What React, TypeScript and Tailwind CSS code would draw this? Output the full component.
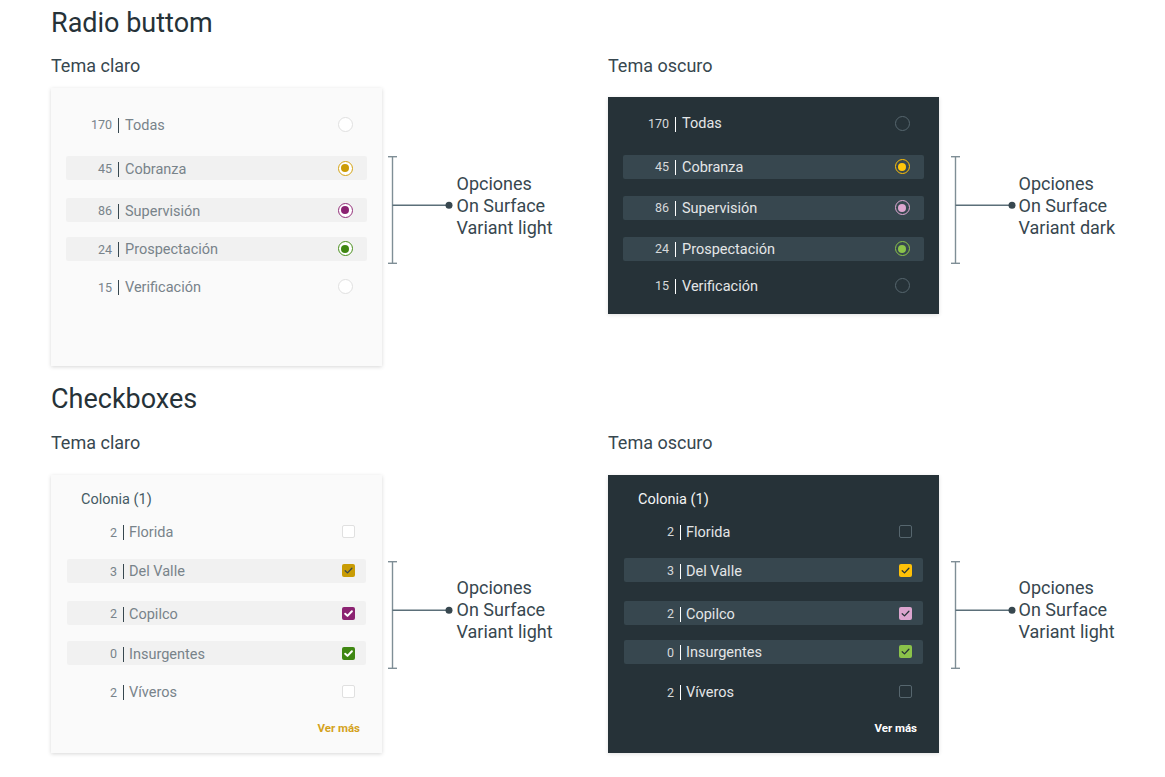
import React from "react";

type RadioRow = {
  n: string;
  label: string;
  hl: boolean;
  mt: string;
  border: string;
  dot?: string;
};

type CheckRow = {
  n: string;
  label: string;
  hl: boolean;
  mt: string;
  box: string;
  check?: string;
  cw?: number;
};

const radioLight: RadioRow[] = [
  { n: "170", label: "Todas", hl: false, mt: "mt-[24.5px]", border: "border-[#e0e0e0] bg-white" },
  { n: "45", label: "Cobranza", hl: true, mt: "mt-[20px]", border: "border-[#d4a313] bg-white", dot: "bg-[#cc9c05]" },
  { n: "86", label: "Supervisión", hl: true, mt: "mt-[18px]", border: "border-[#93307a] bg-white", dot: "bg-[#8b2271]" },
  { n: "24", label: "Prospectación", hl: true, mt: "mt-[14.5px]", border: "border-[#4a8f1c] bg-white", dot: "bg-[#3f8712]" },
  { n: "15", label: "Verificación", hl: false, mt: "mt-[14px]", border: "border-[#e0e0e0] bg-white" },
];

const radioDark: RadioRow[] = [
  { n: "170", label: "Todas", hl: false, mt: "mt-[14px]", border: "border-[#56666e]" },
  { n: "45", label: "Cobranza", hl: true, mt: "mt-[19.5px]", border: "border-[#ffc107]", dot: "bg-[#ffc60a]" },
  { n: "86", label: "Supervisión", hl: true, mt: "mt-[17px]", border: "border-[#e0a9d4]", dot: "bg-[#dea6d0]" },
  { n: "24", label: "Prospectación", hl: true, mt: "mt-[17px]", border: "border-[#8bc34a]", dot: "bg-[#8bc34a]" },
  { n: "15", label: "Verificación", hl: false, mt: "mt-[13px]", border: "border-[#56666e]" },
];

const checkLight: CheckRow[] = [
  { n: "2", label: "Florida", hl: false, mt: "mt-[9px]", box: "border border-[#e0e0e0] bg-white" },
  { n: "3", label: "Del Valle", hl: true, mt: "mt-[15px]", box: "bg-[#c99c04]", check: "#37474f", cw: 1.3 },
  { n: "2", label: "Copilco", hl: true, mt: "mt-[18.5px]", box: "bg-[#8b2271]", check: "#ffffff", cw: 2 },
  { n: "0", label: "Insurgentes", hl: true, mt: "mt-[16px]", box: "bg-[#3f8712]", check: "#ffffff", cw: 2 },
  { n: "2", label: "Víveros", hl: false, mt: "mt-[14.5px]", box: "border border-[#e0e0e0] bg-white" },
];

const checkDark: CheckRow[] = [
  { n: "2", label: "Florida", hl: false, mt: "mt-[8.5px]", box: "border border-[#56666e]" },
  { n: "3", label: "Del Valle", hl: true, mt: "mt-[15px]", box: "bg-[#ffc107]", check: "#263238", cw: 1.3 },
  { n: "2", label: "Copilco", hl: true, mt: "mt-[19px]", box: "bg-[#dca5cf]", check: "#263238", cw: 1.3 },
  { n: "0", label: "Insurgentes", hl: true, mt: "mt-[14.5px]", box: "bg-[#8bc34a]", check: "#263238", cw: 1.3 },
  { n: "2", label: "Víveros", hl: false, mt: "mt-[16px]", box: "border border-[#56666e]" },
];

function Radio({ border, dot }: { border: string; dot?: string }) {
  return (
    <span className={`flex h-[15px] w-[15px] items-center justify-center rounded-full border-[1.3px] ${border}`}>
      {dot && <span className={`h-[8px] w-[8px] rounded-full ${dot}`} />}
    </span>
  );
}

function Check({ box, check, cw }: { box: string; check?: string; cw?: number }) {
  return (
    <span className={`flex h-[13px] w-[13px] items-center justify-center rounded-[2px] ${box}`}>
      {check && (
        <svg viewBox="0 0 13 13" width="13" height="13">
          <path d="M3.2 6.7 L5.5 8.9 L9.9 4.3" fill="none" stroke={check} strokeWidth={cw} strokeLinecap="round" strokeLinejoin="round" />
        </svg>
      )}
    </span>
  );
}

function RadioCard({ dark, rows }: { dark: boolean; rows: RadioRow[] }) {
  return (
    <div
      className={
        dark
          ? "flex h-[217px] w-[331px] shrink-0 flex-col bg-[#263238] shadow-[0_1px_4px_rgba(0,0,0,0.12)]"
          : "flex h-[278px] w-[331px] shrink-0 flex-col bg-[#fafafa] shadow-[0_1px_4px_rgba(0,0,0,0.16)]"
      }
    >
      {rows.map((r) => (
        <div
          key={r.label}
          className={`${r.mt} ml-[15px] flex h-[24px] w-[301px] items-center rounded-[2px] pt-[2px] ${
            r.hl ? (dark ? "bg-[#37474f]" : "bg-[#f1f1f1]") : ""
          }`}
        >
          <span className={`w-[46px] text-right text-[12.5px] ${dark ? "text-[#d6d9db]" : "text-[#78838a]"}`}>{r.n}</span>
          <span className={`ml-[6px] h-[15px] w-px ${dark ? "bg-white" : "bg-[#37474f]"}`} />
          <span className={`ml-[6px] text-[14.5px] ${dark ? "text-[#e4e6e7]" : "text-[#78838a]"}`}>{r.label}</span>
          <span className="ml-auto mr-[14.5px] -mt-[2px]">
            <Radio border={r.border} dot={r.dot} />
          </span>
        </div>
      ))}
    </div>
  );
}

function CheckCard({ dark, rows }: { dark: boolean; rows: CheckRow[] }) {
  return (
    <div
      className={
        dark
          ? "flex h-[278px] w-[331px] shrink-0 flex-col bg-[#263238] shadow-[0_1px_4px_rgba(0,0,0,0.12)]"
          : "flex h-[278px] w-[331px] shrink-0 flex-col bg-[#fafafa] shadow-[0_1px_4px_rgba(0,0,0,0.16)]"
      }
    >
      <div className={`mt-[12px] flex h-[24px] items-center pl-[30px] pt-[2px] text-[14.5px] ${dark ? "text-[#f5f5f5]" : "text-[#455a64]"}`}>
        Colonia (1)
      </div>
      {rows.map((r) => (
        <div
          key={r.label}
          className={`${r.mt} ml-[16px] flex h-[24px] w-[299px] items-center rounded-[2px] pt-[2px] ${
            r.hl ? (dark ? "bg-[#37474f]" : "bg-[#f1f1f1]") : ""
          }`}
        >
          <span className={`w-[50px] text-right text-[12.5px] ${dark ? "text-[#d6d9db]" : "text-[#78838a]"}`}>{r.n}</span>
          <span className={`ml-[6px] h-[15px] w-px ${dark ? "bg-white" : "bg-[#37474f]"}`} />
          <span className={`ml-[5px] text-[14.5px] ${dark ? "text-[#e4e6e7]" : "text-[#78838a]"}`}>{r.label}</span>
          <span className="ml-auto mr-[11px] -mt-[2px]">
            <Check box={r.box} check={r.check} cw={r.cw} />
          </span>
        </div>
      ))}
      <div
        className={`mt-[16.5px] flex h-[16px] items-center justify-end pr-[22px] pt-[1px] text-[11.5px] font-bold ${
          dark ? "text-white" : "text-[#d4a21c]"
        }`}
      >
        Ver más
      </div>
    </div>
  );
}

function Annotation({ lines, textMt, textMl }: { lines: string[]; textMt: string; textMl: string }) {
  return (
    <div className="flex items-start">
      <svg width="65" height="108" viewBox="0 0 65 108" className="shrink-0">
        <line x1="4.5" y1="0.5" x2="4.5" y2="107.5" stroke="#7f8e96" strokeWidth="1.4" />
        <line x1="0" y1="0.7" x2="9" y2="0.7" stroke="#7f8e96" strokeWidth="1.4" />
        <line x1="0" y1="107.3" x2="9" y2="107.3" stroke="#7f8e96" strokeWidth="1.4" />
        <line x1="4.5" y1="49.3" x2="60" y2="49.3" stroke="#5b6f79" strokeWidth="1.4" />
        <circle cx="61" cy="49.3" r="3.5" fill="#37474f" />
      </svg>
      <div className={`${textMt} ${textMl} text-[18px] leading-[22px] text-[#37474f]`}>
        {lines.map((l) => (
          <div key={l}>{l}</div>
        ))}
      </div>
    </div>
  );
}

export default function App() {
  return (
    <div className="min-h-[777px] w-[1165px] bg-white pl-[51px] pt-[6.5px] font-['Roboto',sans-serif]">
      <h1 className="text-[27px] leading-[32px] text-[#263238]">Radio buttom</h1>
      <div className="flex">
        <div className="w-[557px] shrink-0">
          <h2 className="mt-[15.7px] text-[18px] leading-[24px] text-[#37474f]">Tema claro</h2>
          <div className="mt-[9.8px] flex items-start">
            <RadioCard dark={false} rows={radioLight} />
            <div className="ml-[5.5px] mt-[67.7px]">
              <Annotation lines={["Opciones", "On Surface", "Variant light"]} textMt="mt-[17.5px]" textMl="ml-[4px]" />
            </div>
          </div>
        </div>
        <div>
          <h2 className="mt-[15.7px] text-[18px] leading-[24px] text-[#37474f]">Tema oscuro</h2>
          <div className="mt-[19.1px] flex items-start">
            <RadioCard dark={true} rows={radioDark} />
            <div className="ml-[11.5px] mt-[58.4px]">
              <Annotation lines={["Opciones", "On Surface", "Variant dark"]} textMt="mt-[17.5px]" textMl="ml-[3px]" />
            </div>
          </div>
        </div>
      </div>

      <h1 className="mt-[17.5px] text-[27px] leading-[32px] text-[#263238]">Checkboxes</h1>
      <div className="flex">
        <div className="w-[557px] shrink-0">
          <h2 className="mt-[15.7px] text-[18px] leading-[24px] text-[#37474f]">Tema claro</h2>
          <div className="mt-[19.8px] flex items-start">
            <CheckCard dark={false} rows={checkLight} />
            <div className="ml-[5.5px] mt-[85.7px]">
              <Annotation lines={["Opciones", "On Surface", "Variant light"]} textMt="mt-[16.5px]" textMl="ml-[4px]" />
            </div>
          </div>
        </div>
        <div>
          <h2 className="mt-[15.7px] text-[18px] leading-[24px] text-[#37474f]">Tema oscuro</h2>
          <div className="mt-[19.8px] flex items-start">
            <CheckCard dark={true} rows={checkDark} />
            <div className="ml-[11.5px] mt-[85.7px]">
              <Annotation lines={["Opciones", "On Surface", "Variant light"]} textMt="mt-[16.5px]" textMl="ml-[3px]" />
            </div>
          </div>
        </div>
      </div>
    </div>
  );
}
